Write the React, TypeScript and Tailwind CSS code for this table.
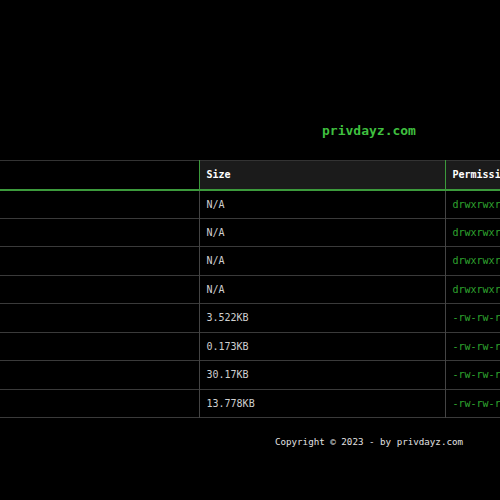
const rows = [
  { name: "assets", size: "N/A", perms: "drwxrwxr-x" },
  { name: "cgi-bin", size: "N/A", perms: "drwxrwxr-x" },
  { name: "uploads", size: "N/A", perms: "drwxrwxr-x" },
  { name: "wp-content", size: "N/A", perms: "drwxrwxr-x" },
  { name: ".htaccess", size: "3.522KB", perms: "-rw-rw-r--" },
  { name: "robots.txt", size: "0.173KB", perms: "-rw-rw-r--" },
  { name: "index.php", size: "30.17KB", perms: "-rw-rw-r--" },
  { name: "config.php", size: "13.778KB", perms: "-rw-rw-r--" },
];

export default function App() {
  return (
    <div className="h-[500px] w-[500px] overflow-hidden bg-black font-['DejaVu_Sans_Mono',monospace]">
      <div className="w-[738px] pt-[122px]">
        <h1 className="text-center text-[13px] font-bold leading-[18px] text-[#3fbf3f]">privdayz.com</h1>
        <table className="-ml-[300px] mt-[20px] w-[1130px] table-fixed border-collapse text-left text-[10px]">
          <colgroup>
            <col className="w-[499px]" />
            <col className="w-[246px]" />
            <col className="w-[246px]" />
            <col />
          </colgroup>
          <thead>
            <tr className="h-[29px] border-t border-b-2 border-t-[#333] border-b-[#3c9a3c] bg-[#1b1b1b] text-white">
              <th className="invisible px-[7px] font-bold">Name</th>
              <th className="border-l border-[#3c9a3c] px-[7px] font-bold">Size</th>
              <th className="border-l border-[#3c9a3c] px-[7px] font-bold">Permissions</th>
              <th className="border-l border-[#3c9a3c] px-[7px] font-bold">Actions</th>
            </tr>
          </thead>
          <tbody>
            {rows.map((r) => (
              <tr key={r.name} className="h-[28.5px] border-b border-[#3a3a3a]">
                <td className="invisible px-[7px] text-[#c8c8c8]">{r.name}</td>
                <td className="border-l border-[#444] px-[7px] text-[#cfcfcf]">{r.size}</td>
                <td className="border-l border-[#444] px-[7px] text-[#2fa52f]">{r.perms}</td>
                <td className="border-l border-[#444] px-[7px] text-[#cfcfcf]">Edit</td>
              </tr>
            ))}
          </tbody>
        </table>
        <p className="mt-[18px] text-center text-[9.2px] leading-[12px] text-[#e2e2e2]">
          Copyright © 2023 - by privdayz.com
        </p>
      </div>
    </div>
  );
}
